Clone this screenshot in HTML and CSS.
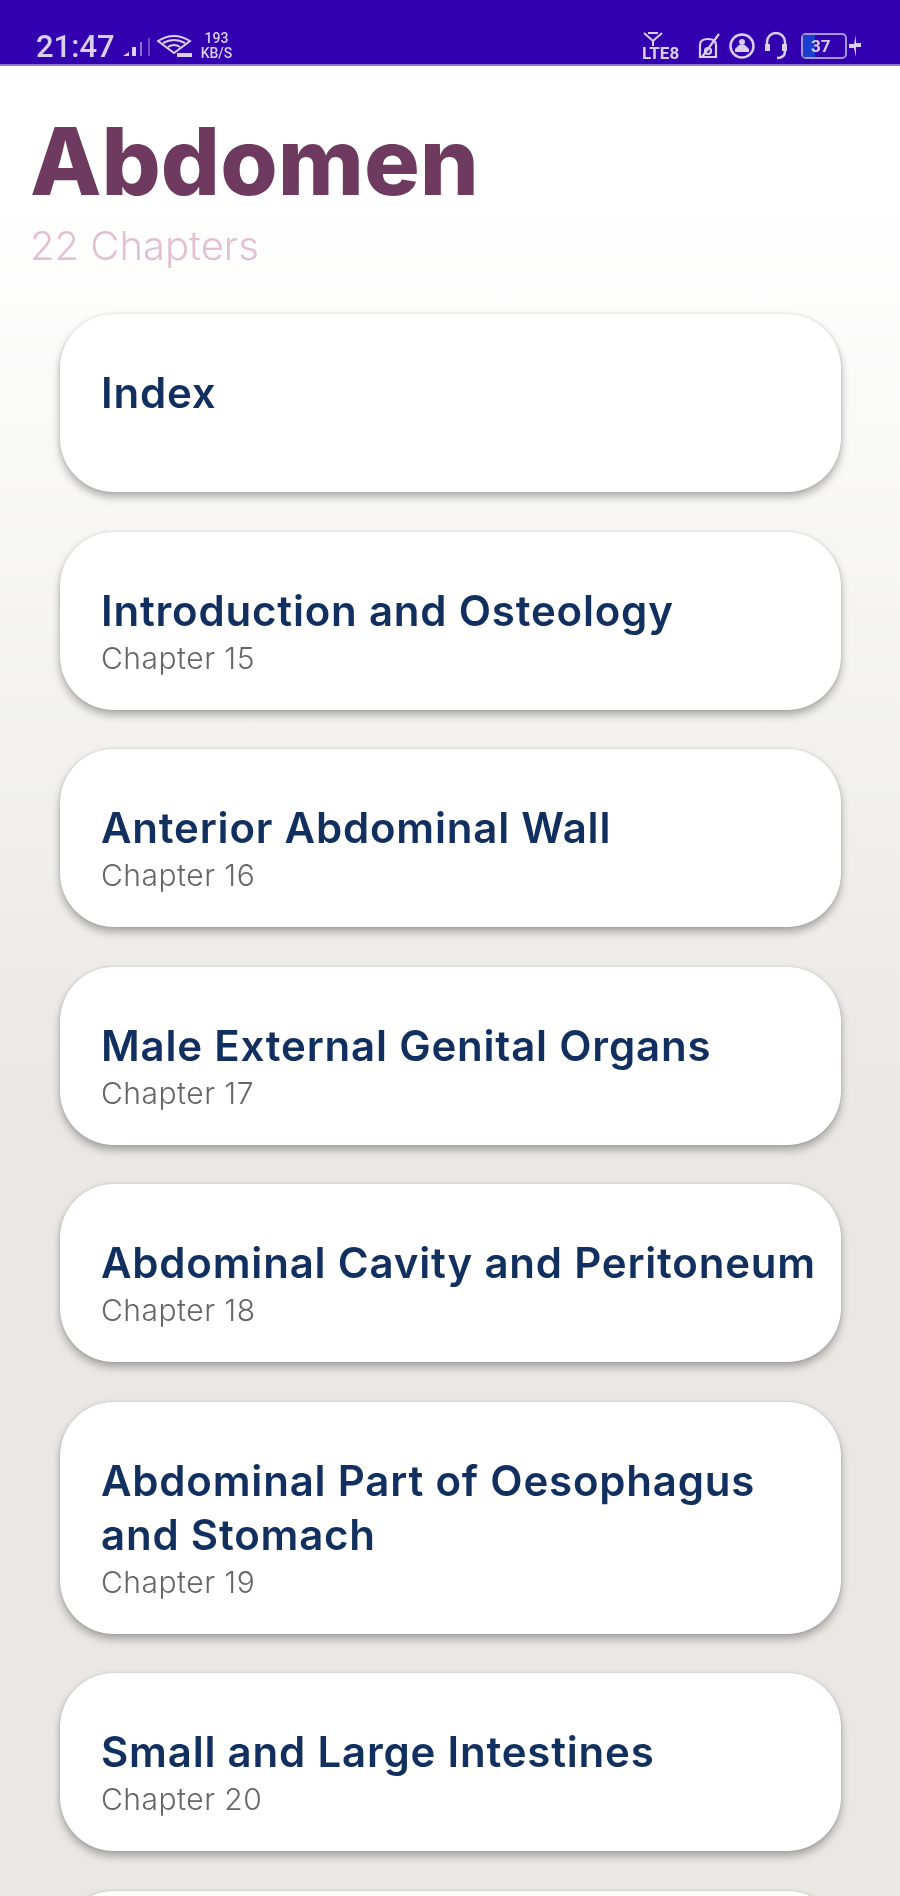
FILE: index.html
```html
<!DOCTYPE html>
<html lang="en">

<head>
    <meta charset="UTF-8">
    <meta name="viewport" content="width=device-width, initial-scale=1.0">
    <title>Abdomen</title>
    <link rel="stylesheet" href="styles.css">
</head>

<body>
    <div class="status-bar">
        <div class="status-left">
            <span class="clock">21:47</span>
            <svg class="icon-signal" width="30" height="28" viewBox="0 0 30 28">
                <path d="M1 24 L7 20 V24 Z" fill="#d9cff0"/>
                <rect x="10" y="15" width="4" height="9" fill="#d9cff0"/>
                <rect x="18" y="10" width="2" height="14" fill="#8d74d0"/>
                <rect x="26" y="6" width="2" height="18" fill="#6a4cc2"/>
            </svg>
            <svg class="icon-wifi" width="36" height="30" viewBox="0 0 36 30" fill="none" stroke="#d9cff0" stroke-width="2">
                <path d="M1 10 Q17 0 33 10 L17 22 Z"/>
                <path d="M6 12 Q17 6 28 12"/>
                <path d="M11 16 Q17 12 23 16"/>
                <path d="M20 24 H35" stroke-width="4"/>
            </svg>
            <span class="speed">193<br>KB/S</span>
        </div>
        <div class="status-right">
            <div class="volte">
                <svg width="22" height="14" viewBox="0 0 22 14" fill="none" stroke="#d9cff0" stroke-width="2">
                    <path d="M2 1 L11 9 L20 1 M11 9 V14 M6 1 H16"/>
                </svg>
                <span>LTE8</span>
            </div>
            <svg width="24" height="28" viewBox="0 0 24 28" fill="none" stroke="#d9cff0" stroke-width="2.2">
                <path d="M3 25 V13 Q3 7 11 7 Q19 7 19 13 V25 Z"/>
                <path d="M22 2 L5 25"/>
                <circle cx="11" cy="19" r="3"/>
            </svg>
            <svg width="28" height="28" viewBox="0 0 28 28" fill="none" stroke="#d9cff0" stroke-width="2.5">
                <circle cx="14" cy="14" r="11.5"/>
                <circle cx="14" cy="10" r="3" fill="#d9cff0" stroke="none"/>
                <path d="M7 20 H21 V17 L17 13 H11 L7 17 Z" fill="#d9cff0" stroke="none"/>
            </svg>
            <svg width="26" height="32" viewBox="0 0 26 32" fill="none" stroke="#d9cff0" stroke-width="2.5">
                <path d="M4 18 V12 A9 9 0 0 1 22 12 V18"/>
                <rect x="2" y="14" width="5" height="7" fill="#d9cff0" stroke="none"/>
                <rect x="19" y="14" width="5" height="7" fill="#d9cff0" stroke="none"/>
                <path d="M22 21 Q22 28 14 28"/>
            </svg>
            <div class="battery"><span class="battery-fill"></span><span class="battery-num">37</span></div>
            <svg class="icon-bolt" width="14" height="26" viewBox="0 0 14 26">
                <path d="M8 2 V10 H13 V14 H8 V24 L6 15 H1 V11 H6 Z" fill="#d9cff0"/>
            </svg>
        </div>
    </div>

    <div class="content">
        <h1>Abdomen</h1>
        <p class="subtitle">22 Chapters</p>

        <div class="chapter-list">
            <div class="card">
                <div class="card-title">Index</div>
            </div>
            <div class="card">
                <div class="card-title">Introduction and Osteology</div>
                <div class="card-sub">Chapter 15</div>
            </div>
            <div class="card">
                <div class="card-title">Anterior Abdominal Wall</div>
                <div class="card-sub">Chapter 16</div>
            </div>
            <div class="card">
                <div class="card-title">Male External Genital Organs</div>
                <div class="card-sub">Chapter 17</div>
            </div>
            <div class="card">
                <div class="card-title">Abdominal Cavity and Peritoneum</div>
                <div class="card-sub">Chapter 18</div>
            </div>
            <div class="card">
                <div class="card-title">Abdominal Part of Oesophagus<br>and Stomach</div>
                <div class="card-sub">Chapter 19</div>
            </div>
            <div class="card">
                <div class="card-title">Small and Large Intestines</div>
                <div class="card-sub">Chapter 20</div>
            </div>
            <div class="card"></div>
        </div>
    </div>
</body>

</html>
```

FILE: styles.css
```css
html, body {
    margin: 0;
    height: 1896px;
    overflow: hidden;
}

body {
    font-family: Inter, Lato, sans-serif;
    background-color: #e9e8e5;
}

.status-bar {
    height: 66px;
    padding: 28px 38px 0 36px;
    box-sizing: border-box;
    display: flex;
    justify-content: space-between;
    align-items: center;
    background-color: #3300b0;
    border-bottom: 2px solid #8d74d0;
    color: #d9cff0;
}

.status-left, .status-right {
    display: flex;
    align-items: center;
    filter: blur(0.7px);
}

.status-left {
    gap: 5px;
}

.status-right {
    gap: 7px;
}

.clock {
    font-family: Roboto, sans-serif;
    font-size: 31px;
    font-weight: 500;
    margin-right: 2px;
}

.speed {
    font-family: Roboto, sans-serif;
    font-size: 14px;
    font-weight: 500;
    line-height: 15px;
    text-align: center;
    margin-left: 3px;
}

.volte {
    display: flex;
    flex-direction: column;
    width: 48px;
    font-family: Roboto, sans-serif;
    font-size: 17px;
    font-weight: 700;
    line-height: 15px;
}

.battery {
    position: relative;
    width: 46px;
    height: 26px;
    border: 2px solid #a796dc;
    border-radius: 5px;
    box-sizing: border-box;
    margin-left: 5px;
    margin-right: -6px;
}

.battery-fill {
    display: block;
    width: 12px;
    height: 100%;
    background-color: #1c3ed0;
}

.battery-num {
    position: absolute;
    top: 1px;
    left: 8px;
    font-family: Roboto, sans-serif;
    font-size: 17px;
    font-weight: 700;
    line-height: 20px;
}

.content {
    height: 1830px;
    overflow: hidden;
    padding: 45px 59px 0 60px;
    box-sizing: border-box;
    background: linear-gradient(#ffffff 0, #ffffff 120px, #e9e8e5 1050px);
}

h1 {
    margin: 0 0 0 -30px;
    font-size: 93px;
    font-weight: 800;
    line-height: 100px;
    color: #6f3a5f;
    filter: blur(0.5px);
}

.subtitle {
    margin: 9px 0 0 -30px;
    font-size: 40px;
    font-weight: 300;
    line-height: 52px;
    color: #e3bfd2;
    filter: blur(0.5px);
}

.chapter-list {
    margin-top: 42px;
    display: flex;
    flex-direction: column;
    gap: 39.5px;
}

.card {
    min-height: 178px;
    flex-shrink: 0;
    padding: 52px 0 32px 41px;
    box-sizing: border-box;
    background-color: #fff;
    border-radius: 54px;
    box-shadow: 0 5px 8px rgba(0, 0, 0, 0.3), 0 0 3px rgba(0, 0, 0, 0.12);
}

.card-title {
    font-size: 42px;
    font-weight: 600;
    letter-spacing: 0.8px;
    line-height: 54px;
    color: #12305f;
    filter: blur(0.5px);
}

.card-sub {
    font-size: 30px;
    font-weight: 300;
    letter-spacing: 0.5px;
    line-height: 40px;
    color: #666;
    filter: blur(0.5px);
}
```
